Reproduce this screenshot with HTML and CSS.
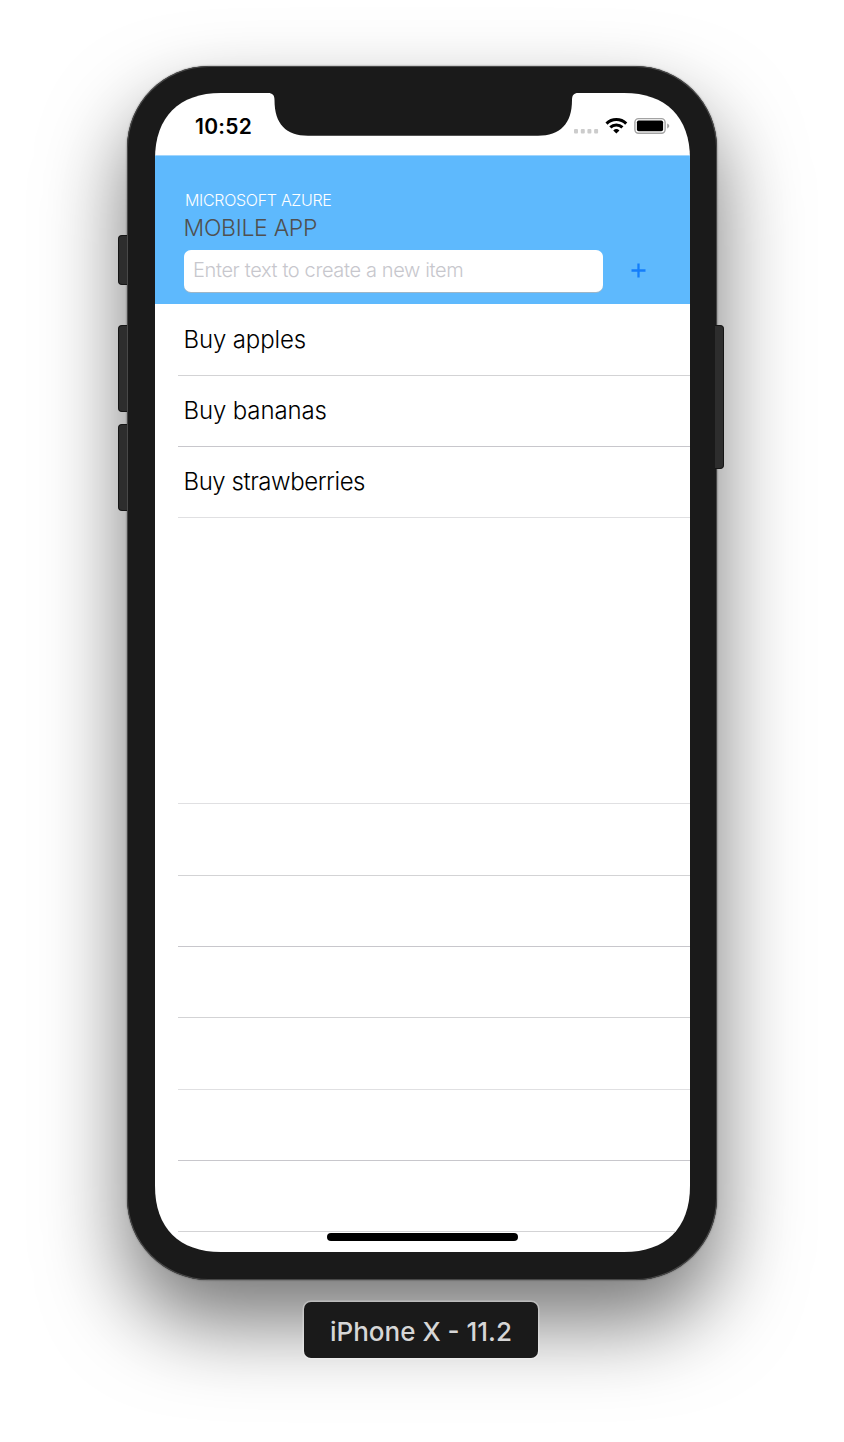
FILE: index.html
```html
<!DOCTYPE html>
<html lang="en">
<head>
<meta charset="utf-8">
<title>Mobile App</title>
<link rel="stylesheet" href="styles.css">
</head>
<body>
<main class="stage">
  <div class="phone">
    <span class="key key-mute"></span>
    <span class="key key-up"></span>
    <span class="key key-down"></span>
    <span class="key key-power"></span>
    <div class="screen">
      <div class="status">
        <span class="time">10:52</span>
        <svg class="status-icons" width="98" height="20" viewBox="0 0 98 20">
          <g fill="#ccc">
            <rect x="1" y="13" width="4" height="4.5" rx="1"/>
            <rect x="7.8" y="13" width="4" height="4.5" rx="1"/>
            <rect x="14.4" y="13" width="4" height="4.5" rx="1"/>
            <rect x="21.1" y="13" width="4" height="4.5" rx="1"/>
          </g>
          <g fill="none" stroke="#000" stroke-width="3">
            <path d="M33.5 7.6a14 14 0 0 1 19.7 0"/>
            <path d="M37.3 11.4a8.6 8.6 0 0 1 12.1 0"/>
          </g>
          <path d="M43.35 17.6l-3.1-3.2a4.5 4.5 0 0 1 6.2 0z"/>
          <rect x="61.9" y="2.6" width="30.2" height="14.6" rx="3.6" fill="none" stroke="#a3a3a3" stroke-width="1.4"/>
          <rect x="63.9" y="4.5" width="26.2" height="10.8" rx="1.8"/>
          <path d="M94.2 7.5c2.7 1 2.7 3.9 0 4.9z" fill="#a3a3a3"/>
        </svg>
      </div>
      <header class="header">
        <div class="brand">MICROSOFT AZURE</div>
        <div class="title">MOBILE APP</div>
        <div class="entry">
          <div class="field">Enter text to create a new item</div>
          <svg class="add" width="15" height="15" viewBox="0 0 15 15"><path d="M7.5.5v14M.5 7.5h14" stroke="#147efb" stroke-width="2.3"/></svg>
        </div>
      </header>
      <div class="list">
        <div class="row"><span class="item">Buy apples</span></div>
        <div class="row dark"><span class="item">Buy bananas</span></div>
        <div class="row light"><span class="item tight">Buy strawberries</span></div>
        <div class="row light"></div>
        <div class="row"></div>
        <div class="row dark"></div>
        <div class="row"></div>
        <div class="row light"></div>
        <div class="row dark"></div>
        <div class="row"></div>
      </div>
      <svg class="notch" width="310" height="43" viewBox="0 0 310 43"><path d="M0 0C4.500 0 6.500 2 6.500 7C6.500 31 18 42.700 40 42.700H270C292 42.700 304 31 304 7C304 2 306 0 310 0Z"/></svg>
      <span class="home"></span>
    </div>
  </div>
  <div class="label"><span>iPhone X - 11.2</span></div>
</main>
</body>
</html>
```
FILE: styles.css
```css
* { box-sizing: border-box; }
body { margin: 0; background: #fff; font-family: Inter, "Liberation Sans", sans-serif; }
.stage {
  width: 844px; height: 1442px; padding-top: 66px; overflow: hidden;
  display: flex; flex-direction: column; align-items: center;
}
.phone {
  position: relative; flex: none; width: 590px; height: 1214px; padding: 27px 27px 28px 28px;
  background: #1a1a1a; border-radius: 82px;
  box-shadow: inset 0 0 0 1px #484848, 0 0 2px rgba(0,0,0,.55), 0 42px 84px rgba(0,0,0,.54);
}
.key {
  position: absolute; left: -9px; width: 9px; background: #2d2d2d;
  border: 1px solid #151515; border-right: 0; border-radius: 4px 0 0 4px;
}
.key-mute { top: 169px; height: 50px; }
.key-up { top: 259px; height: 87px; }
.key-down { top: 358px; height: 87px; }
.key-power { left: auto; right: -7px; top: 259px; height: 144px; border-right: 1px solid #151515; border-left: 0; border-radius: 0 4px 4px 0; }
.screen {
  position: relative; width: 535px; height: 1159px; background: #fff;
  clip-path: path("M0 66C0 24 24 0 66 0H469C511 0 535 24 535 66V1093C535 1135 511 1159 469 1159H66C24 1159 0 1135 0 1093Z");
}
.status {
  height: 62px; padding: 0 19px 0 40px;
  display: flex; justify-content: space-between; align-items: flex-start;
}
.time { margin-top: 21px; font-size: 21px; line-height: 26px; font-weight: 600; letter-spacing: .3px; color: #000; }
.status-icons { margin-top: 23px; }
.header { height: 149px; padding: 37px 0 0 29px; border-top: 1px solid #a0d5fd; background: #5eb9fd; font-weight: 300; }
.brand { height: 17px; line-height: 15px; padding-left: 1px; font-size: 16px; letter-spacing: -.3px; color: #fff; white-space: nowrap; }
.title { height: 34px; line-height: 36px; margin-left: -.5px; font-size: 23px; letter-spacing: -.3px; color: #505050; white-space: nowrap; }
.entry { margin-top: 6px; display: flex; align-items: center; gap: 28px; }
.field {
  width: 418.5px; height: 42px; padding-left: 9px; line-height: 40px; font-size: 20px; letter-spacing: -.36px;
  color: #c7c7cd; background: #fff; border-radius: 7px; white-space: nowrap;
  box-shadow: 0 1px 0 #9db6c8;
}
.add { margin-top: -2px; }
.list {
  padding-left: 23px; display: grid;
  grid-template-rows: 72px 71px 71px 286px 72px 71px 71px 72px 71px 71px;
}
.row { padding-left: 5.5px; border-bottom: 1px solid #d3d3d5; display: flex; align-items: center; }
.row.dark { border-color: #c8c7cc; }
.row.light { border-color: #e0e0e2; }
.item { font-size: 24px; line-height: 30px; font-weight: 300; letter-spacing: -.13px; color: #000; }
.item.tight { letter-spacing: -.45px; }
.notch { position: absolute; left: 113px; top: 0; fill: #1a1a1a; }
.home { position: absolute; left: 172px; top: 1140px; width: 191px; height: 8px; border-radius: 4px; background: #000; }
.label {
  position: relative; width: 234px; height: 56px; margin: 22px 2px 0 0; border-radius: 7px; background: #1a1a1a;
  box-shadow: 0 0 0 1.5px rgba(255,255,255,.3); color: #d6d6d6;
  display: flex; align-items: center; justify-content: center;
  font-size: 26px; font-weight: 500; line-height: 32px; padding-top: 4px; white-space: nowrap;
}
```
